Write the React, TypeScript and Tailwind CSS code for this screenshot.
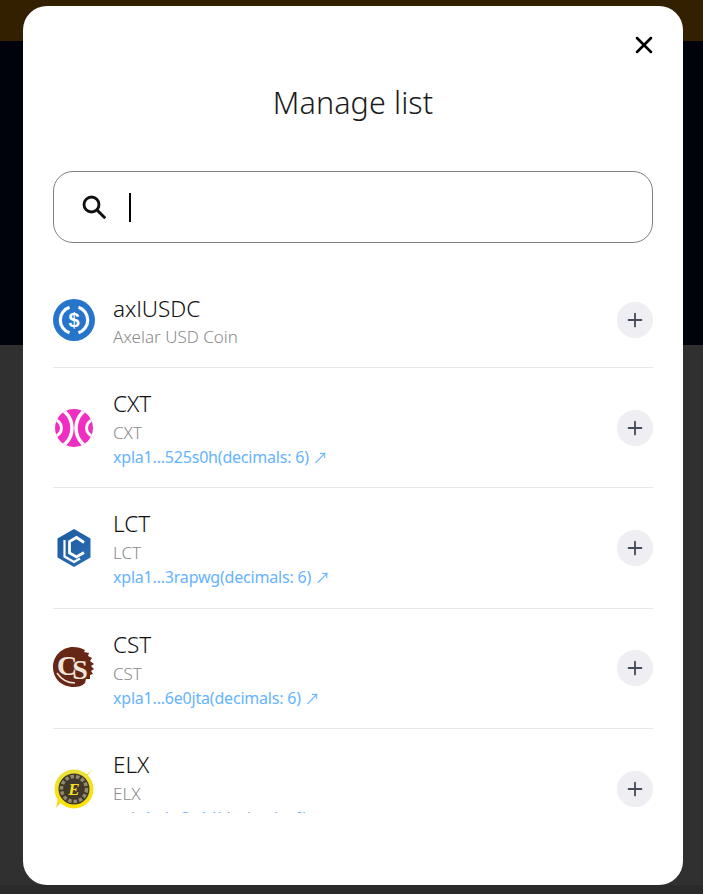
import { Plus, X } from "lucide-react";

const FONT = "font-['Noto_Sans','Noto_Sans_CJK_KR',sans-serif]";

const UsdcLogo = () => (
  <svg viewBox="0 0 42 42" className="h-[42px] w-[42px]">
    <circle cx="21" cy="21" r="21" fill="#2775ca" />
    <path d="M16.500 8.200a13.500 13.500 0 0 0 0 25.600" fill="none" stroke="#fff" strokeWidth="3.200" />
    <path d="M25.500 8.200a13.500 13.500 0 0 1 0 25.600" fill="none" stroke="#fff" strokeWidth="3.200" />
    <text
      x="21"
      y="28"
      textAnchor="middle"
      fontFamily="'Liberation Sans', sans-serif"
      fontWeight="700"
      fontSize="20"
      fill="#fff"
    >
      $
    </text>
  </svg>
);

const CxtLogo = () => (
  <svg viewBox="0 0 42 42" className="h-[42px] w-[42px]">
    <defs>
      <clipPath id="cxt-disc">
        <circle cx="21" cy="21" r="19" />
      </clipPath>
    </defs>
    <circle cx="21" cy="21" r="19" fill="#f02fc2" />
    <g clipPath="url(#cxt-disc)" fill="none" stroke="#fff">
      <circle cx="-3" cy="21" r="22" strokeWidth="3.500" />
      <circle cx="45" cy="21" r="22" strokeWidth="3.500" />
      <circle cx="0" cy="21" r="8.500" strokeWidth="3" />
      <circle cx="42" cy="21" r="8.500" strokeWidth="3" />
    </g>
  </svg>
);

const LctLogo = () => (
  <svg viewBox="0 0 42 42" className="h-[42px] w-[42px]">
    <defs>
      <linearGradient id="lct-fill" x1="0" y1="0" x2="1" y2="1">
        <stop offset="0" stopColor="#1b5a9e" />
        <stop offset="1" stopColor="#2a6db5" />
      </linearGradient>
    </defs>
    <path d="M21 2 37.500 11.500v19L21 40 4.500 30.500v-19Z" fill="url(#lct-fill)" />
    <path d="M11.500 13v16.500l9.500 5.500 6-3.500" fill="none" stroke="#fff" strokeWidth="2.200" />
    <path d="M31 15.500 23.500 10.500 16.500 14.500v11.500l7 4 7.500-4.500" fill="none" stroke="#fff" strokeWidth="2.800" />
  </svg>
);

const CstLogo = () => (
  <svg viewBox="0 0 42 42" className="h-[42px] w-[42px]">
    <path
      d="M20 0c5 0 8 1 12 3l-1 2 5 1-1 3 4 2-2 3 4 3-3 2 3 3-3 2 2 3-3 1 0 4-4 0-1 4c-3 3-7 4-11 4C8 40 0 31 0 20 0 9 9 0 20 0Z"
      fill="#672716"
    />
    <path d="M4 26c4 6 10 10 18 10" fill="none" stroke="#efe6da" strokeWidth="1.500" />
    <text
      x="4"
      y="28"
      fontFamily="'Liberation Serif', serif"
      fontWeight="700"
      fontSize="28"
      letterSpacing="-5"
      fill="#efe6da"
    >
      C<tspan dy="4">S</tspan>
    </text>
  </svg>
);

const ElxLogo = () => (
  <svg viewBox="0 0 42 42" className="h-[42px] w-[42px]">
    <defs>
      <linearGradient id="elx-fill" x1="0" y1="0" x2="0" y2="1">
        <stop offset="0" stopColor="#e9e13a" />
        <stop offset="1" stopColor="#ffe100" />
      </linearGradient>
    </defs>
    <path d="M39 2 34 8 8 34 3 40 5 30Z" fill="#f4d91f" />
    <circle cx="21" cy="21" r="19.500" fill="url(#elx-fill)" />
    <circle cx="21" cy="21" r="15.500" fill="#40382a" />
    <circle cx="21" cy="21" r="12.500" fill="none" stroke="#948a72" strokeWidth="3.500" strokeDasharray="3.500 2" />
    <circle cx="21" cy="21" r="9.500" fill="#40382a" />
    <text
      x="21"
      y="27"
      textAnchor="middle"
      fontFamily="'Liberation Serif', serif"
      fontStyle="italic"
      fontWeight="700"
      fontSize="17"
      fill="#f8e01e"
    >
      E
    </text>
  </svg>
);

const tokens = [
  { symbol: "axlUSDC", name: "Axelar USD Coin", logo: <UsdcLogo /> },
  { symbol: "CXT", name: "CXT", link: "xpla1...525s0h(decimals: 6)", logo: <CxtLogo /> },
  { symbol: "LCT", name: "LCT", link: "xpla1...3rapwg(decimals: 6)", logo: <LctLogo /> },
  { symbol: "CST", name: "CST", link: "xpla1...6e0jta(decimals: 6)", logo: <CstLogo /> },
  { symbol: "ELX", name: "ELX", link: "xpla1...ks8v4d(decimals: 6)", logo: <ElxLogo /> },
];

export default function App() {
  return (
    <div className={`relative flex h-[894px] w-full flex-col overflow-hidden bg-[#2f2f2f] ${FONT}`}>
      <div className="h-[41px] bg-[#332000]" />
      <div className="h-[304px] bg-[#00030c]" />
      <div className="flex-1 bg-[#303030]" />
      <div className="h-[9px] bg-[#2a2a2a]" />

      {/* modal */}
      <div className="absolute left-[23px] top-[6px] h-[879px] w-[660px] rounded-[24px] bg-white px-[30px]">
        <button className="absolute right-[25px] top-[25px] text-black">
          <X size={28} strokeWidth={2.2} />
        </button>
        <h2 className="mt-[75px] text-center text-[30.500px] font-light leading-[42px] tracking-[0.1px] text-[#1a1a1a]">
          Manage list
        </h2>

        <div className="mt-[48px] flex h-[72px] items-center rounded-[20px] border border-[#808080] pl-[25px]">
          <svg viewBox="0 0 24 24" className="h-[30px] w-[30px]" fill="none" stroke="#111" strokeWidth="2.300">
            <circle cx="10" cy="10" r="6" />
            <path d="m14.500 14.500 6.500 6.500" />
          </svg>
          <div className="ml-[20px] h-[29px] w-[2px] bg-black" />
        </div>

        <div className="mt-[40px] h-[530px] overflow-hidden">
          {tokens.map((t, i) => (
            <div
              key={t.symbol}
              className={`flex items-center justify-between border-b border-[#e8e8e8] ${
                i === 0 ? "h-[85px] pb-[10px]" : "h-[120.330px]"
              }`}
            >
              <div className="flex items-center">
                <div className="flex w-[60px] shrink-0">{t.logo}</div>
                <div className="pt-[3px]">
                  <div className="text-[22.500px] font-light leading-[30px] text-[#111]">{t.symbol}</div>
                  <div
                    className={`text-[17px] font-light leading-[24px] text-[#8a8a8a] ${
                      t.link ? "mt-[2px]" : "mt-[1px]"
                    }`}
                  >
                    {t.name}
                  </div>
                  {t.link && (
                    <div className="text-[16px] leading-[24px] tracking-[-0.2px] text-[#66b3ff]">
                      {t.link} <span className="text-[15px]">↗</span>
                    </div>
                  )}
                </div>
              </div>
              <button className="flex h-9 w-9 items-center justify-center rounded-full bg-[#eeeef3] text-[#454b57]">
                <Plus size={22} strokeWidth={2} />
              </button>
            </div>
          ))}
        </div>
      </div>
    </div>
  );
}
